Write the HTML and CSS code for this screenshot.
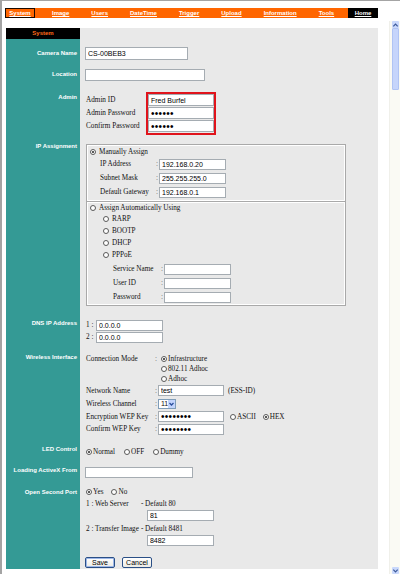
FILE: index.html
```html
<!DOCTYPE html>
<html>
<head>
<meta charset="utf-8">
<link rel="stylesheet" href="styles.css">
</head>
<body>
<div class="frame">
  <div class="page">
    <nav class="nav">
      <div class="menu">
        <a class="current">System</a>
        <a>Image</a>
        <a>Users</a>
        <a>DateTime</a>
        <a>Trigger</a>
        <a>Upload</a>
        <a>Information</a>
        <a>Tools</a>
      </div>
      <a class="home">Home</a>
    </nav>

    <div class="panel">
      <div class="lbl head">System</div>
      <div class="fld"></div>

      <div class="lbl p9">Camera Name</div>
      <div class="fld cam"><input class="in w-name h13" value="CS-00BEB3"></div>

      <div class="lbl p5">Location</div>
      <div class="fld loc"><input class="in w-loc h12" value=""></div>

      <div class="lbl p6">Admin</div>
      <div class="fld admin">
        <div class="admin-labels">
          <div>Admin ID</div>
          <div>Admin Password</div>
          <div>Confirm Password</div>
        </div>
        <div class="redbox">
          <input class="in h12" value="Fred Burfel">
          <input class="in h12 pw" type="password" value="xxxxxx">
          <input class="in h12 pw" type="password" value="xxxxxx">
        </div>
      </div>

      <div class="lbl p3">IP Assignment</div>
      <div class="fld ip">
        <div class="ipbox">
          <div class="sec manual">
            <div class="opt"><span class="rd on"></span>Manually Assign</div>
            <div class="kv kv-manual">
              <span>IP Address</span><span class="colon">:</span><input class="in" value="192.168.0.20">
              <span>Subnet Mask</span><span class="colon">:</span><input class="in" value="255.255.255.0">
              <span>Default Gateway</span><span class="colon">:</span><input class="in" value="192.168.0.1">
            </div>
          </div>
          <div class="sec auto">
            <div class="opt"><span class="rd"></span>Assign Automatically Using</div>
            <div class="subopts">
              <div class="opt"><span class="rd"></span>RARP</div>
              <div class="opt"><span class="rd"></span>BOOTP</div>
              <div class="opt"><span class="rd"></span>DHCP</div>
              <div class="opt"><span class="rd"></span>PPPoE</div>
            </div>
            <div class="kv kv-pppoe">
              <span>Service Name</span><span class="colon">:</span><input class="in" value="">
              <span>User ID</span><span class="colon">:</span><input class="in" value="">
              <span>Password</span><span class="colon">:</span><input class="in" value="">
            </div>
          </div>
        </div>
      </div>

      <div class="lbl p6">DNS IP Address</div>
      <div class="fld dns">
        <div class="dns-row"><span class="num">1 :</span><input class="in w-dns" value="0.0.0.0"></div>
        <div class="dns-row"><span class="num">2 :</span><input class="in w-dns" value="0.0.0.0"></div>
      </div>

      <div class="lbl p6">Wireless Interface</div>
      <div class="fld wl">
        <div class="wgrid">
          <span class="top">Connection Mode</span><span class="colon top">:</span>
          <div class="modes">
            <div class="opt"><span class="rd on"></span>Infrastructure</div>
            <div class="opt"><span class="rd"></span>802.11 Adhoc</div>
            <div class="opt"><span class="rd"></span>Adhoc</div>
          </div>

          <span>Network Name</span><span class="colon">:</span>
          <div class="val"><input class="in w-wl" value="test"><span class="ess">(ESS-ID)</span></div>

          <span>Wireless Channel</span><span class="colon">:</span>
          <div class="val">
            <span class="select">11<span class="sel-arrow"><svg viewBox="0 0 7 8" width="7" height="8"><path d="M1.5 3 L3.5 5 L5.5 3" fill="none" stroke="#2b4f9c" stroke-width="1.3"/></svg></span></span>
          </div>

          <span>Encryption WEP Key</span><span class="colon">:</span>
          <div class="val">
            <input class="in w-wl pw" type="password" value="xxxxxxxx">
            <span class="opt ascii"><span class="rd"></span>ASCII</span>
            <span class="opt hex"><span class="rd on"></span>HEX</span>
          </div>

          <span>Confirm WEP Key</span><span class="colon">:</span>
          <div class="val"><input class="in w-wl pw" type="password" value="xxxxxxxx"></div>
        </div>
      </div>

      <div class="lbl p6">LED Control</div>
      <div class="fld led">
        <span class="opt"><span class="rd on"></span>Normal</span>
        <span class="opt"><span class="rd"></span>OFF</span>
        <span class="opt"><span class="rd"></span>Dummy</span>
      </div>

      <div class="lbl p5">Loading ActiveX From</div>
      <div class="fld ax"><input class="in w-ax" value=""></div>

      <div class="lbl p3">Open Second Port</div>
      <div class="fld port">
        <div class="yn">
          <span class="opt"><span class="rd on"></span>Yes</span>
          <span class="opt"><span class="rd"></span>No</span>
        </div>
        <div class="ptable">
          <span>1 : Web Server</span><span>- Default 80</span>
          <span></span><input class="in w-port" value="81">
          <span class="gap">2 : Transfer Image</span><span class="gap">- Default 8481</span>
          <span></span><input class="in w-port" value="8482">
        </div>
        <div class="buttons">
          <button class="btn default">Save</button>
          <button class="btn">Cancel</button>
        </div>
      </div>
    </div>
  </div>

  <div class="scroll">
    <div class="sb-btn"><svg viewBox="0 0 8 6" width="8" height="6"><path d="M1.5 4.5 L4 2 L6.5 4.5" fill="none" stroke="#3d5a9a" stroke-width="1.4"/></svg></div>
    <div class="sb-thumb"></div>
    <div class="sb-track"></div>
    <div class="sb-btn"><svg viewBox="0 0 8 6" width="8" height="6"><path d="M1.5 1.5 L4 4 L6.5 1.5" fill="none" stroke="#3d5a9a" stroke-width="1.4"/></svg></div>
  </div>
</div>
</body>
</html>
```

FILE: styles.css
```css
* { box-sizing: border-box; }

body {
  margin: 0;
  background: #fff;
  font-family: "Liberation Serif", "Times New Roman", serif;
  color: #111;
}

.frame {
  display: flex;
  height: 574px;
  border-top: 1px solid #a4a4a4;
  border-left: 2px solid #a4a4a4;
  overflow: hidden;
}

.page {
  margin-left: 3px;
  width: 373px;
  padding-top: 7px;
}

/* ---------- top navigation ---------- */
.nav {
  display: flex;
  height: 10px;
}

.menu {
  display: flex;
  align-items: center;
  gap: 22px;
  width: 343px;
  background: #ff6600;
}

.menu a,
.home {
  font: bold 6px/8px "Liberation Sans", Arial, sans-serif;
  color: #fff;
  text-decoration: underline;
}

.menu .current {
  width: 30px;
  height: 10px;
  margin-right: -5px;
  border: 1px solid #1a0a00;
  display: flex;
  align-items: center;
  justify-content: center;
}

.home {
  width: 30px;
  background: #000;
  display: flex;
  align-items: center;
  justify-content: center;
}

/* ---------- form panel ---------- */
.panel {
  margin: 10px 0 0 1px;
  display: grid;
  grid-template-columns: 74px 298px;
  background: #e9e9e9;
}

.lbl {
  background: #349a95;
  color: #fff;
  font: bold 6px/10px "Liberation Sans", Arial, sans-serif;
  text-align: right;
  padding-right: 3px;
  white-space: nowrap;
}

.lbl.head {
  background: #000;
  color: #ff6a1a;
  text-align: center;
  height: 11px;
  line-height: 11px;
  padding: 0;
}

.p3 { padding-top: 3px; }
.p5 { padding-top: 5px; }
.p6 { padding-top: 6px; }
.p9 { padding-top: 9px; }

.fld {
  padding-left: 5px;
  font-size: 7.2px;
  line-height: 10px;
  white-space: nowrap;
}

.in {
  display: block;
  appearance: none;
  -webkit-appearance: none;
  margin: 0;
  height: 11px;
  padding: 0 2px;
  border: 1px solid #a5acb2;
  border-radius: 0;
  background: #fff;
  font: 7px/9px "Liberation Sans", Arial, sans-serif;
  color: #000;
  outline: none;
}

.in.pw {
  font-size: 10px;
  letter-spacing: 0.3px;
}

.h12 { height: 12px; }
.h13 { height: 13px; }

.w-name { width: 103px; }
.w-loc { width: 120px; }
.w-dns { width: 67px; }
.w-wl { width: 66px; }
.w-ax { width: 108px; }
.w-port { width: 67px; margin-left: 6px; }

.colon { color: #666; }

/* radios */
.rd {
  display: inline-block;
  position: relative;
  width: 6px;
  height: 6px;
  border: 1px solid #5a5a5a;
  border-radius: 50%;
  background: #fff;
  margin-right: 1px;
  flex: none;
}

.rd.on::after {
  content: "";
  position: absolute;
  left: 1px;
  top: 1px;
  width: 2px;
  height: 2px;
  border-radius: 50%;
  background: #222;
}

.opt {
  display: flex;
  align-items: center;
  height: 10px;
}

/* rows */
.cam { padding-top: 8px; padding-bottom: 4px; }
.loc { padding-top: 5px; padding-bottom: 5px; }

.admin {
  display: flex;
  align-items: flex-start;
  padding: 6px 0 3px 6px;
}

.admin-labels {
  width: 60px;
  padding-top: 2px;
}

.admin-labels div {
  height: 13px;
  line-height: 13px;
}

.redbox {
  width: 70px;
  border: 2px solid #e0141c;
  padding-bottom: 1px;
  display: flex;
  flex-direction: column;
  gap: 1px;
}

/* IP assignment */
.ip {
  padding: 6px 0 6px 6px;
}

.ipbox {
  width: 260px;
  border: 1px solid #a9a9a9;
}

.sec {
  box-shadow: inset 1px 1px 0 #fff, inset -1px -1px 0 #fff;
}

.sec + .sec {
  border-top: 1px solid #a9a9a9;
}

.ipbox .rd { margin-right: 3px; }

.manual {
  padding: 2px 0 2px 3px;
}

.auto {
  padding: 1px 0 1px 3px;
}

.kv {
  display: grid;
  grid-auto-rows: 14px;
  align-items: center;
}

.kv-manual {
  margin-left: 10px;
  grid-template-columns: 56px 3px 67px;
}

.kv-pppoe {
  margin: 1px 0 0 23px;
  grid-template-columns: 48px 3px 67px;
}

.subopts {
  padding-left: 13px;
}

.subopts .opt {
  height: 12px;
}

/* DNS */
.dns {
  padding: 7px 0 3px 6px;
}

.dns-row {
  display: flex;
  align-items: center;
  height: 12px;
}

.num {
  width: 10px;
}

/* Wireless */
.wl {
  padding: 8px 0 3px 6px;
}

.wgrid {
  display: grid;
  grid-template-columns: 69px 3px 180px;
  grid-template-rows: 30px 13px 13px 13px 12px;
  align-items: center;
}

.wgrid .top {
  align-self: start;
}

.modes {
  align-self: start;
  padding-left: 3px;
}

.val {
  display: flex;
  align-items: center;
}

.ess { margin-left: 4px; }
.ascii { margin-left: 6px; }
.hex { margin-left: 7px; }

.select {
  display: flex;
  align-items: center;
  justify-content: space-between;
  width: 18px;
  height: 10px;
  padding-left: 2px;
  border: 1px solid #7f9db9;
  background: #fff;
  font: 7px/8px "Liberation Sans", Arial, sans-serif;
}

.sel-arrow {
  display: flex;
  width: 7px;
  height: 8px;
  background: #c3d4fc;
}

/* LED */
.led {
  display: flex;
  gap: 9px;
  padding: 9px 0 3px 6px;
}

/* ActiveX */
.ax {
  padding-top: 7px;
  padding-bottom: 6px;
}

/* Second port */
.port {
  padding: 3px 0 1px 6px;
}

.yn {
  display: flex;
  gap: 8px;
}

.ptable {
  display: grid;
  grid-template-columns: max-content max-content;
  column-gap: 2px;
  margin-top: 2px;
}

.ptable .gap {
  margin-top: 3px;
}

.ptable > input {
  margin-top: 1px;
}

.buttons {
  display: flex;
  gap: 7px;
  margin-top: 11px;
  margin-left: -1px;
}

.btn {
  width: 30px;
  height: 11px;
  padding: 0;
  border: 1px solid #2a4f86;
  border-radius: 2px;
  background: linear-gradient(#ffffff, #ecebe4);
  font: 7px/9px "Liberation Sans", Arial, sans-serif;
  color: #000;
}

.btn.default {
  box-shadow: inset 0 0 0 1px #9db7e8;
}

/* scrollbar */
.scroll {
  margin: 20px 0 0 auto;
  width: 11px;
  display: flex;
  flex-direction: column;
  background: #fafaf4;
  border-left: 1px solid #f0f0ea;
}

.sb-btn {
  height: 7px;
  margin: 0 1px 0 2px;
  display: flex;
  align-items: center;
  justify-content: center;
  background: #c9d8fb;
  border-radius: 1px;
}

.sb-thumb {
  height: 62px;
  margin: 0 1px 0 2px;
  background: #c6d5fb;
  border: 1px solid #b0c4f4;
  border-radius: 1px;
}

.sb-track {
  flex: 1;
}
```
